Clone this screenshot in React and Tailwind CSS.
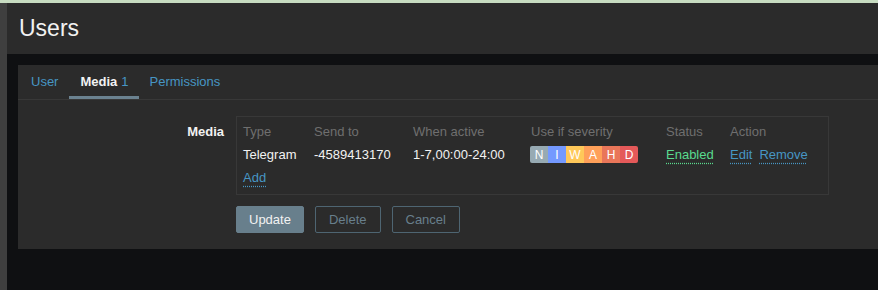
import React from 'react';

const severities = [
  { l: 'N', c: 'bg-[#97aab3]' },
  { l: 'I', c: 'bg-[#7499ff]' },
  { l: 'W', c: 'bg-[#ffc859]' },
  { l: 'A', c: 'bg-[#ffa059]' },
  { l: 'H', c: 'bg-[#e97659]' },
  { l: 'D', c: 'bg-[#e45959]' },
];

function DotLink({ children, color = 'text-[#4796c4] decoration-[#4796c4]' }) {
  return (
    <span className={`${color} underline decoration-dotted underline-offset-[4px] cursor-pointer`}>{children}</span>
  );
}

export default function App() {
  return (
    <div className="w-[878px] h-[290px] overflow-hidden bg-[#0f1012] text-[13px] text-[#f2f2f2]" style={{ fontFamily: '"Liberation Sans", Arial, sans-serif' }}>
      <div className="h-[3px] bg-[#c7dcc1]" />
      <div className="flex h-[287px]">
        <div className="w-[7px] shrink-0 bg-[#3f3f3f]" />
        <div className="flex-1 flex flex-col">
          <header className="h-[51px] bg-[#2b2b2b] flex items-center pl-[12px]">
            <h1 className="text-[23px] text-[#f2f2f2] leading-none">Users</h1>
          </header>
          <div className="pt-[11px] pl-[11px]">
            <section className="bg-[#2b2b2b] pb-[16px]">
              <nav className="flex border-b border-[#383838] h-[35px] pl-[2px]">
                <a className="px-[11px] flex items-center text-[#4796c4]">User</a>
                <a className="pl-[11px] pr-[10px] flex items-center font-bold text-[#f2f2f2] border-b-[3px] border-[#6b8290] pt-[3px]">
                  Media<span className="font-normal text-[#4796c4] ml-[4px]">1</span>
                </a>
                <a className="px-[11px] flex items-center text-[#4796c4]">Permissions</a>
              </nav>
              <div className="flex pt-[16px]">
                <div className="w-[206px] text-right font-bold pt-[6px] pr-0">Media</div>
                <div className="ml-[12px]">
                  <div className="w-[593px] h-[79px] border border-[#383838] pl-[6px] pt-[3px]">
                    <div className="flex h-[23px] items-center text-[#6f6f6f]">
                      <div className="w-[71px]">Type</div>
                      <div className="w-[99px]">Send to</div>
                      <div className="w-[118px]">When active</div>
                      <div className="w-[135px]">Use if severity</div>
                      <div className="w-[64px]">Status</div>
                      <div>Action</div>
                    </div>
                    <div className="flex h-[23px] items-center">
                      <div className="w-[71px]">Telegram</div>
                      <div className="w-[99px]">-4589413170</div>
                      <div className="w-[118px]">1-7,00:00-24:00</div>
                      <div className="w-[135px]">
                        <div className="flex w-[108px] h-[17px] rounded-[2px] overflow-hidden -ml-[1px]">
                          {severities.map((s) => (
                            <span key={s.l} className={`${s.c} flex-1 flex items-center justify-center text-[12px] text-white`}>{s.l}</span>
                          ))}
                        </div>
                      </div>
                      <div className="w-[64px]">
                        <DotLink color="text-[#59db8f] decoration-[#59db8f]">Enabled</DotLink>
                      </div>
                      <div className="flex gap-[7px]">
                        <DotLink>Edit</DotLink>
                        <DotLink>Remove</DotLink>
                      </div>
                    </div>
                    <div className="flex h-[24px] items-center">
                      <DotLink>Add</DotLink>
                    </div>
                  </div>
                  <div className="flex gap-[11px] mt-[11px]">
                    <button className="h-[27px] px-[12px] rounded-[2px] bg-[#687f8c] text-[#f2f2f2] border border-[#687f8c]">Update</button>
                    <button className="h-[27px] px-[13px] rounded-[2px] border border-[#4e6572] text-[#687f8c]">Delete</button>
                    <button className="h-[27px] px-[13px] rounded-[2px] border border-[#4e6572] text-[#687f8c]">Cancel</button>
                  </div>
                </div>
              </div>
            </section>
          </div>
        </div>
      </div>
    </div>
  );
}
